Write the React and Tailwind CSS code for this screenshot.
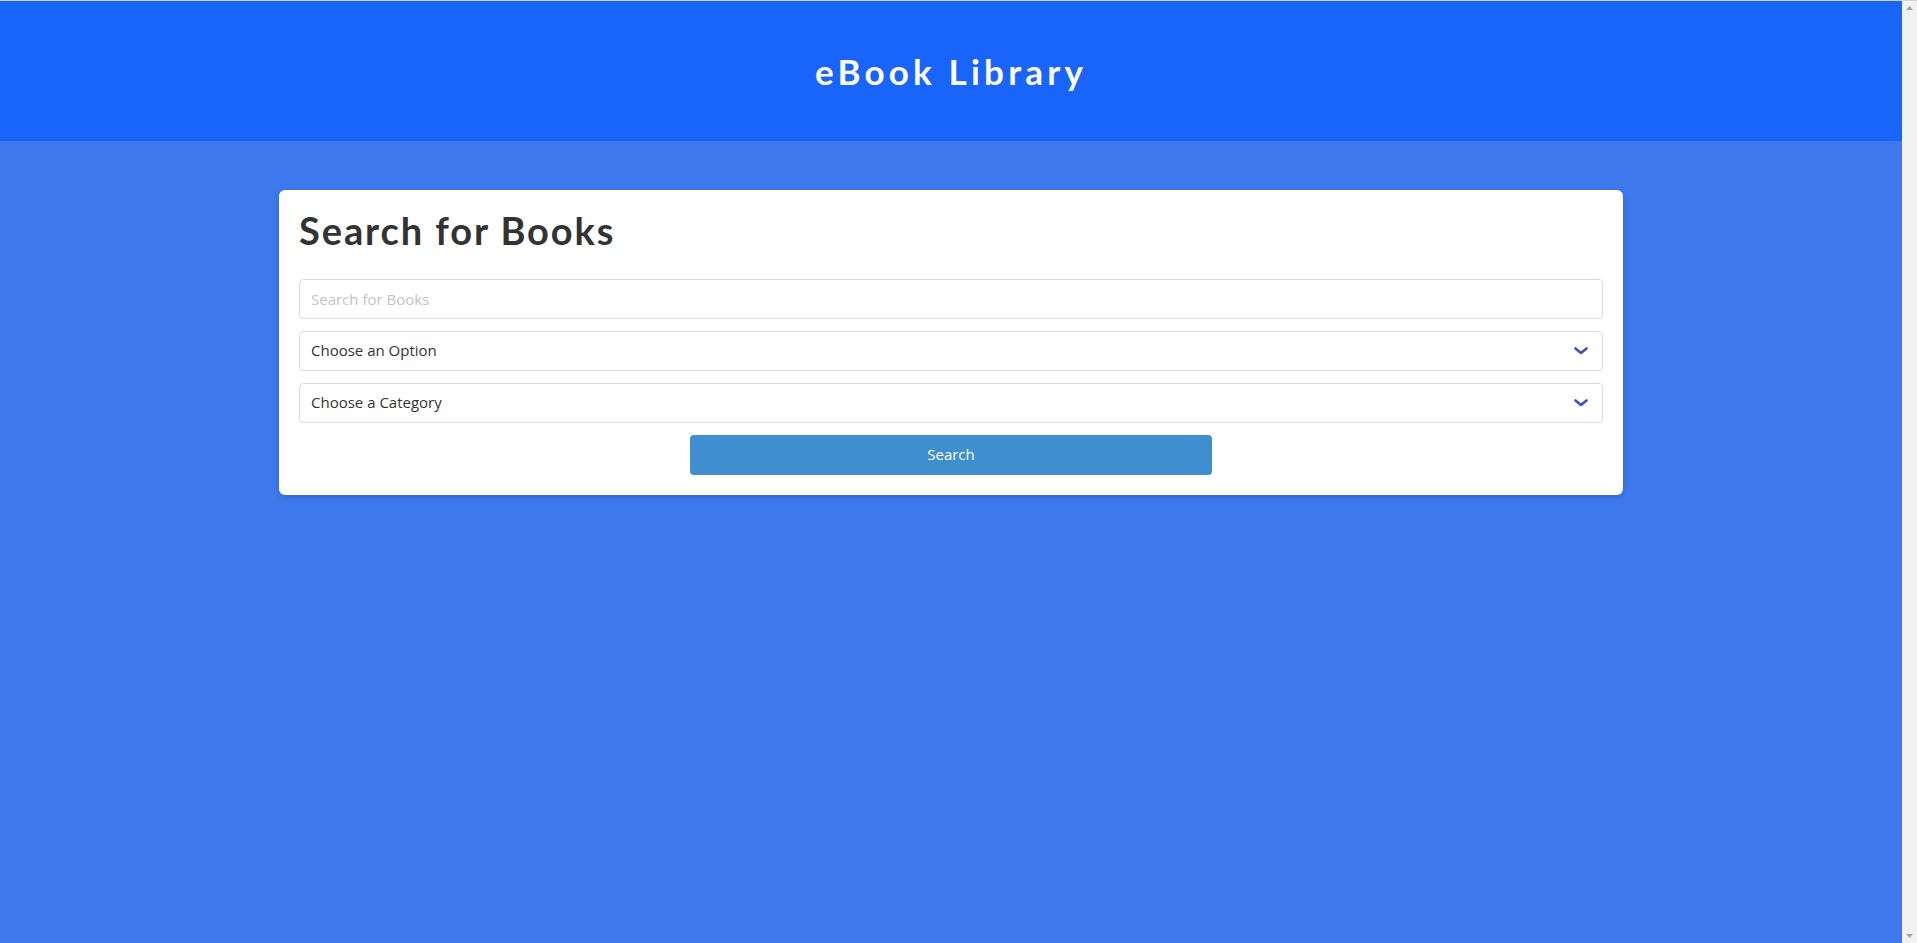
import React, { useState } from 'react';

function Chevron() {
  return (
    <svg
      className="pointer-events-none absolute right-[15px] top-1/2 -translate-y-1/2"
      width="14"
      height="8"
      viewBox="0 0 14 8"
      fill="none"
    >
      <path d="M1.5 1.5 L7 6 L12.5 1.5" stroke="#3b50c9" strokeWidth="2.6" strokeLinecap="round" strokeLinejoin="round" />
    </svg>
  );
}

function SelectBox({ value, onChange, placeholder, options }) {
  return (
    <div className="relative">
      <select
        value={value}
        onChange={(e) => onChange(e.target.value)}
        className="block h-10 w-full appearance-none rounded border border-[#dcdcdc] bg-white pl-[11px] pr-10 text-[15px] text-[#333] outline-none"
      >
        <option value="">{placeholder}</option>
        {options.map((o) => (
          <option key={o} value={o}>{o}</option>
        ))}
      </select>
      <Chevron />
    </div>
  );
}

// fake classic scrollbar track (no thumb, page doesn't overflow)
function ScrollTrack() {
  return (
    <aside className="flex w-[15px] shrink-0 flex-col items-center justify-between bg-[#f1f1f1] py-[5px]">
      <svg width="7" height="4" viewBox="0 0 7 4">
        <path d="M3.5 0 L7 4 L0 4 Z" fill="#a3a3a3" />
      </svg>
      <svg width="7" height="4" viewBox="0 0 7 4">
        <path d="M0 0 L7 0 L3.5 4 Z" fill="#a3a3a3" />
      </svg>
    </aside>
  );
}

export default function App() {
  const [query, setQuery] = useState('');
  const [option, setOption] = useState('');
  const [category, setCategory] = useState('');

  return (
    <div className="flex h-screen flex-col overflow-hidden font-['Open_Sans',sans-serif]">
      <div className="h-px shrink-0 bg-[#d4d4d4]" />
      <div className="flex min-h-0 flex-1">
        <div className="min-w-0 flex-1 bg-[#3d79ed]">
          {/* Header */}
          <header className="flex h-[140px] items-center justify-center bg-[#1964fb]">
            <h1 className="font-['Lato',sans-serif] text-[35px] font-bold leading-none tracking-[4.2px] text-white">
              eBook Library
            </h1>
          </header>

          {/* Search card */}
          <main className="flex justify-center pt-[49px]">
            <div className="w-[1344px] rounded-md bg-white px-5 pb-5 pt-[18px] shadow-[0_2px_6px_rgba(0,0,0,0.15)]">
              <h2 className="mb-[25px] font-['Lato',sans-serif] text-[38px] font-bold leading-[1.2] tracking-[1.9px] text-[#333]">
                Search for Books
              </h2>
              <div className="flex flex-col gap-3">
                <input
                  type="text"
                  value={query}
                  onChange={(e) => setQuery(e.target.value)}
                  placeholder="Search for Books"
                  className="block h-10 w-full rounded border border-[#dcdcdc] bg-white px-[11px] text-[15px] text-[#333] outline-none placeholder:text-[#c4c2c9]"
                />
                <SelectBox
                  value={option}
                  onChange={setOption}
                  placeholder="Choose an Option"
                  options={['Title', 'Author', 'ISBN']}
                />
                <SelectBox
                  value={category}
                  onChange={setCategory}
                  placeholder="Choose a Category"
                  options={['Fiction', 'Science', 'History', 'Biography']}
                />
                <button className="mx-auto block h-10 w-[40%] rounded bg-[#3f8fd0] text-[15px] text-white">
                  Search
                </button>
              </div>
            </div>
          </main>
        </div>
        <ScrollTrack />
      </div>
    </div>
  );
}
